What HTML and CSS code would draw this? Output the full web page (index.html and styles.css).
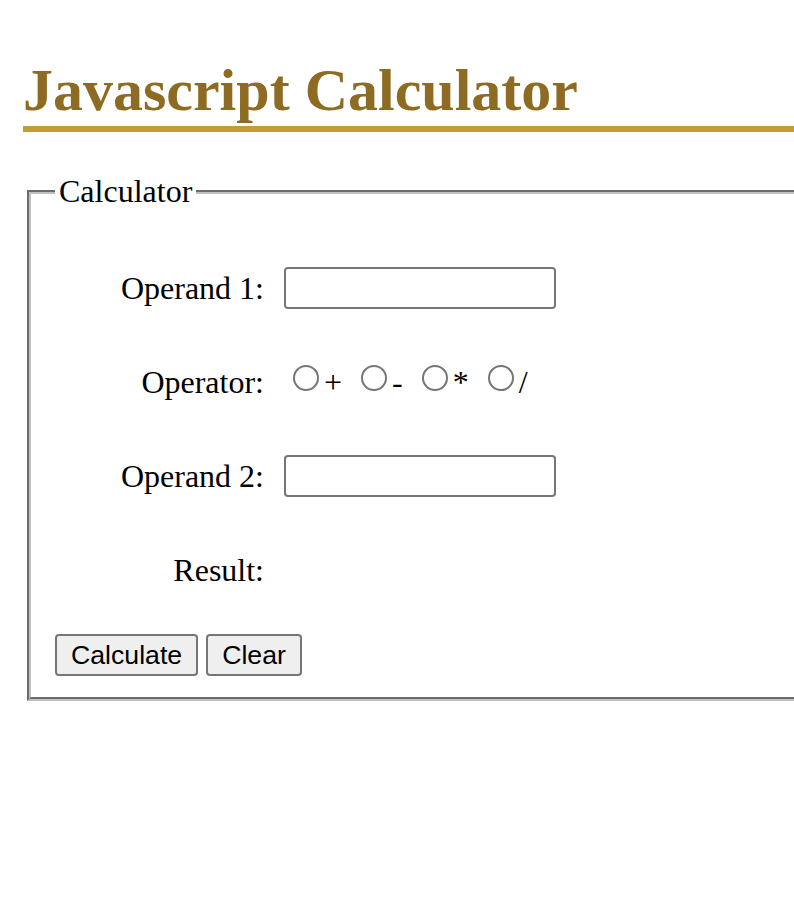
FILE: index.html
```html
<!DOCTYPE html>
<html lang="en">
<head>
<meta charset="utf-8">
<title>Javascript Calculator</title>
<link rel="stylesheet" href="styles.css">
</head>
<body>
<div class="page">
  <h1 class="title">Javascript Calculator</h1>
  <fieldset class="calc">
    <legend class="calc-legend">Calculator</legend>
    <div class="rows">
      <label class="row-label" for="op1">Operand 1:</label>
      <div class="row-field"><input class="text-input" type="text" id="op1"></div>

      <span class="row-label">Operator:</span>
      <div class="row-field operators">
        <label class="op"><input class="radio" type="radio" name="operator" value="+"><span class="op-text">+</span></label>
        <label class="op"><input class="radio" type="radio" name="operator" value="-"><span class="op-text">-</span></label>
        <label class="op"><input class="radio" type="radio" name="operator" value="*"><span class="op-text">*</span></label>
        <label class="op"><input class="radio" type="radio" name="operator" value="/"><span class="op-text">/</span></label>
      </div>

      <label class="row-label" for="op2">Operand 2:</label>
      <div class="row-field"><input class="text-input" type="text" id="op2"></div>

      <span class="row-label">Result:</span>
      <div class="row-field result"></div>
    </div>
    <div class="buttons">
      <button class="btn" type="button">Calculate</button>
      <button class="btn" type="button">Clear</button>
    </div>
  </fieldset>
</div>
</body>
</html>
```
FILE: styles.css
```css
html, body {
  margin: 0;
  padding: 0;
  background: #ffffff;
}

body {
  font-family: "Liberation Serif", "Times New Roman", serif;
  font-size: 32px;
  color: #000000;
  overflow-x: hidden;
}

.page {
  padding: 0 0 0 23px;
}

.title {
  margin: 55px 0 41px 0;
  font-size: 60px;
  font-weight: bold;
  line-height: 71px;
  color: #8e6b23;
  border-bottom: 6px solid #c19b36;
}

.calc {
  margin: 0 0 0 4px;
  padding: 11px 24px 21px 24px;
  border: 4px groove #c0c0c0;
  border-right: none;
  min-width: 0;
}

.calc-legend {
  padding: 0 4px;
  font-size: 32px;
}

.rows {
  display: grid;
  grid-template-columns: 209px 1fr;
  grid-auto-rows: 94px;
  column-gap: 20px;
  align-items: center;
  padding-top: 20px;
}

.row-label {
  text-align: right;
}

.row-field {
  display: flex;
  align-items: center;
}

.text-input {
  box-sizing: border-box;
  width: 272px;
  height: 42px;
  margin: 0;
  padding: 2px 4px;
  border: 2px solid #767676;
  border-radius: 4px;
  font-family: "Liberation Sans", Arial, sans-serif;
  font-size: 26px;
  background: #ffffff;
}

.operators {
  gap: 0;
}

.op {
  display: flex;
  align-items: center;
  margin-right: 10px;
}

.radio {
  appearance: none;
  -webkit-appearance: none;
  box-sizing: border-box;
  width: 26px;
  height: 26px;
  margin: 0 5px 8px 9px;
  border: 2px solid #767676;
  border-radius: 50%;
  background: #ffffff;
}

.op-text {
  font-size: 32px;
}

.buttons {
  display: flex;
  gap: 8px;
  margin-top: 17px;
}

.btn {
  box-sizing: border-box;
  height: 42px;
  margin: 0;
  padding: 0 14px;
  border: 2px solid #767676;
  border-radius: 4px;
  background: #efefef;
  font-family: "Liberation Sans", Arial, sans-serif;
  font-size: 26.67px;
  color: #000000;
}
```
